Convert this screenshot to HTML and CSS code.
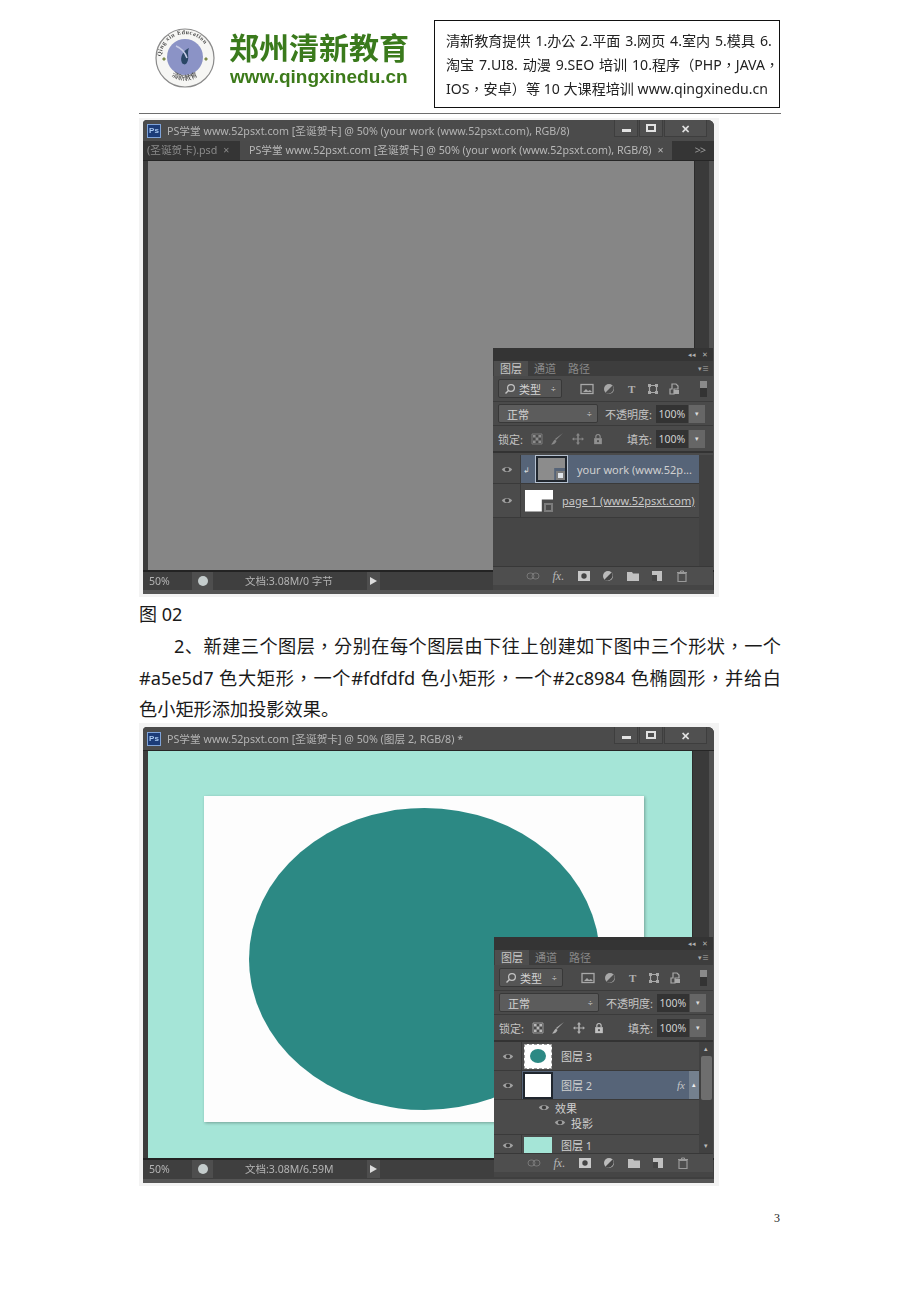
FILE: index.html
```html
<!DOCTYPE html>
<html lang="zh-CN">
<head>
  <meta charset="UTF-8" />
  <title>郑州清新教育</title>
  <link rel="stylesheet" href="styles.css">
</head>
<body>

  <svg class="sprites" width="0" height="0">
    <symbol id="eye" viewBox="0 0 14 10">
      <path d="M1 5c2-4 10-4 12 0c-2 4-10 4-12 0z" fill="#a0a0a0"/>
      <circle cx="7" cy="5" r="2.400" fill="#3a3a3a"/>
    </symbol>
    <symbol id="search" viewBox="0 0 12 12">
      <circle cx="7" cy="5" r="3.400" fill="none" stroke="#c4c4c4" stroke-width="1.200"/>
      <path d="M4.500 7.500L1.500 10.500" stroke="#c4c4c4" stroke-width="1.400"/>
    </symbol>
    <symbol id="f-image" viewBox="0 0 14 12">
      <rect x="1" y="1.500" width="12" height="9" fill="none" stroke="#a8a8a8" stroke-width="1.300"/>
      <path d="M3 9l3-3 2 2 2-1 2 2z" fill="#a8a8a8"/>
    </symbol>
    <symbol id="f-adjust" viewBox="0 0 12 12">
      <circle cx="6" cy="6" r="5" fill="#a8a8a8"/>
      <path d="M9.500 2.500L2.500 9.500A5 5 0 0 0 9.500 2.500z" fill="#4c4c4c"/>
    </symbol>
    <symbol id="f-shape" viewBox="0 0 12 12">
      <path d="M2.500 2.500h7v7h-7z" fill="none" stroke="#a8a8a8" stroke-width="1.200"/>
      <path d="M1 1h3v3H1zM8 1h3v3H8zM1 8h3v3H1zM8 8h3v3H8z" fill="#a8a8a8"/>
    </symbol>
    <symbol id="f-smart" viewBox="0 0 12 12">
      <path d="M4 1h4l2 2v3H6v5H2V6h2z" fill="none" stroke="#a8a8a8" stroke-width="1.200"/>
      <path d="M6 7h5v4H6z" fill="#a8a8a8"/>
    </symbol>
    <symbol id="l-checker" viewBox="0 0 12 12">
      <path d="M1 1h10v10H1z" fill="#4a4a4a" stroke="#9a9a9a"/>
      <path d="M2 2h2.600v2.600H2zM7.400 2H10v2.600H7.400zM4.600 4.600h2.800v2.800H4.600zM2 7.400h2.600V10H2zM7.400 7.400H10V10H7.400z" fill="#b8b8b8"/>
    </symbol>
    <symbol id="l-brush" viewBox="0 0 14 14">
      <path d="M13 1L6 8l-1-1z" fill="#b0b0b0"/>
      <path d="M5 7.500l1.500 1.500C5.500 12 3 12.500 1 12.500C2.500 11.500 3 9 5 7.500z" fill="#b0b0b0"/>
    </symbol>
    <symbol id="l-move" viewBox="0 0 14 14">
      <path d="M7 1l2 2.500H7.800v3h3V5.300L13 7l-2.200 1.700V7.500h-3v3H9L7 13l-2-2.500h1.200v-3h-3v1.200L1 7l2.200-1.700v1.200h3v-3H5z" fill="#b0b0b0"/>
    </symbol>
    <symbol id="l-lock" viewBox="0 0 12 14">
      <path d="M3.500 6V4.200a2.500 2.500 0 0 1 5 0V6" fill="none" stroke="#c0c0c0" stroke-width="1.300"/>
      <path d="M1.500 6h9v7h-9z" fill="#c0c0c0"/>
      <circle cx="6" cy="9.500" r="1.200" fill="#4c4c4c"/>
    </symbol>
    <symbol id="b-link" viewBox="0 0 14 8">
      <rect x="1" y="1" width="7" height="6" rx="3" fill="none" stroke="#777" stroke-width="1"/>
      <rect x="6" y="1" width="7" height="6" rx="3" fill="none" stroke="#777" stroke-width="1"/>
    </symbol>
    <symbol id="b-mask" viewBox="0 0 12 10">
      <rect width="12" height="10" fill="#c8c8c8"/>
      <circle cx="6" cy="5" r="2.700" fill="#444"/>
    </symbol>
    <symbol id="b-adjust" viewBox="0 0 12 12">
      <circle cx="6" cy="6" r="5" fill="#bbb"/>
      <path d="M9.500 2.500L2.500 9.500A5 5 0 0 0 9.500 2.500z" fill="#444"/>
    </symbol>
    <symbol id="b-folder" viewBox="0 0 12 10">
      <path d="M0 1h5l1 1.500h6V10H0z" fill="#c0c0c0"/>
    </symbol>
    <symbol id="b-new" viewBox="0 0 12 12">
      <path d="M1 1h10v10H1z" fill="#c0c0c0"/>
      <path d="M1 5h5v6H1z" fill="#444"/>
    </symbol>
    <symbol id="b-trash" viewBox="0 0 12 12">
      <path d="M1 2.500h10M4.500 2.500V1h3v1.500" fill="none" stroke="#999" stroke-width="1"/>
      <path d="M2 3.500h8V11.500H2z" fill="none" stroke="#999" stroke-width="1.200"/>
    </symbol>
  </svg>

  <main class="page">

    <header class="letterhead">
      <div class="brand">
        <svg class="seal" viewBox="0 0 60 60">
          <circle cx="30" cy="30" r="29" fill="#f6f6f4" stroke="#8a8a8a" stroke-width="1.200"/>
          <circle cx="30" cy="29" r="18" fill="#8b93c6"/>
          <path d="M27 35c-3-6 2-13 7-15c-2 5 0 8-1 12c-1 4-3 6-6 3z" fill="#2a4766"/>
          <path d="M21 18c5 2 9 6 11 12" fill="none" stroke="#c6cbe6" stroke-width="1.500"/>
          <path d="M7 31l2-2 2 2-2 2zM49 31l2-2 2 2-2 2z" fill="#7c8a4a"/>
          <path id="sealArc" d="M6 30a24 24 0 0 1 48 0" fill="none"/>
          <path id="sealLow" d="M12 43a22 22 0 0 0 36 0" fill="none"/>
          <text class="seal-text"><textPath href="#sealArc" startOffset="2%">Qing xin Education</textPath></text>
          <text class="seal-cn"><textPath href="#sealLow" startOffset="16%">清新教育</textPath></text>
        </svg>
        <div class="brand-name">
          <div class="brand-cn">郑州清新教育</div>
          <div class="brand-url">www.qingxinedu.cn</div>
        </div>
      </div>
      <div class="course-box" lang="zh-TW">
        <div class="course-line">清新教育提供 1.办公 2.平面 3.网页 4.室内 5.模具 6.</div>
        <div class="course-line">淘宝 7.UI8. 动漫 9.SEO 培训 10.程序（PHP，JAVA，</div>
        <div class="course-line course-line-last">IOS，安卓）等 10 大课程培训 www.qingxinedu.cn</div>
      </div>
    </header>

    <figure class="shot shot-one">
      <div class="ps-window">
        <div class="ps-title">
          <span class="ps-logo">Ps</span>
          <span class="ps-title-text">PS学堂 www.52psxt.com [圣诞贺卡] @ 50% (your work (www.52psxt.com), RGB/8)</span>
          <div class="ps-controls">
            <span class="ctl"><i class="ctl-min"></i></span>
            <span class="ctl"><i class="ctl-max"></i></span>
            <span class="ctl ctl-wide">✕</span>
          </div>
        </div>
        <div class="ps-tabs">
          <span class="tab tab-off">(圣诞贺卡).psd<b>×</b></span>
          <span class="tab tab-on">PS学堂 www.52psxt.com [圣诞贺卡] @ 50% (your work (www.52psxt.com), RGB/8)<b>×</b></span>
          <span class="tab-more">&gt;&gt;</span>
        </div>
        <div class="ps-body">
          <div class="ps-canvas canvas-grey"></div>
          <div class="ps-scroll"></div>
        </div>
        <div class="ps-status">
          <span class="st-zoom">50%</span>
          <span class="st-btn"><i class="st-dot"></i></span>
          <span class="st-doc">文档:3.08M/0 字节</span>
          <span class="st-btn st-btn-arrow"><i class="st-arrow"></i></span>
        </div>

        <section class="panel panel-one">
          <div class="panel-top"><span>◂◂</span><span>✕</span></div>
          <div class="panel-tabs">
            <span class="ptab ptab-on">图层</span><span class="ptab">通道</span><span class="ptab">路径</span>
            <span class="ptab-menu">▾≡</span>
          </div>
          <div class="prow prow-filter">
            <span class="pfield pfield-kind"><svg class="i12"><use href="#search"/></svg>类型<em>÷</em></span>
            <div class="filter-icons">
              <svg class="i14"><use href="#f-image"/></svg>
              <svg class="i12"><use href="#f-adjust"/></svg>
              <span class="f-t">T</span>
              <svg class="i12"><use href="#f-shape"/></svg>
              <svg class="i12"><use href="#f-smart"/></svg>
            </div>
            <span class="switch"></span>
          </div>
          <div class="prow prow-blend">
            <span class="pfield pfield-mode">正常<em>÷</em></span>
            <span class="plabel">不透明度:</span><span class="pval">100%</span><span class="pbtn">▾</span>
          </div>
          <div class="prow prow-lock">
            <span class="plabel">锁定:</span>
            <div class="lock-icons dim">
              <svg class="i12"><use href="#l-checker"/></svg>
              <svg class="i14"><use href="#l-brush"/></svg>
              <svg class="i14"><use href="#l-move"/></svg>
              <svg class="i12"><use href="#l-lock"/></svg>
            </div>
            <span class="plabel plabel-fill">填充:</span><span class="pval">100%</span><span class="pbtn">▾</span>
          </div>
          <div class="layers">
            <div class="layer-list">
              <div class="layer layer-active h29">
                <span class="eye"><svg class="i-eye"><use href="#eye"/></svg></span>
                <span class="clip">↲</span>
                <span class="thumb thumb-selected">
                  <span class="thumb-grey"></span>
                  <span class="smart-badge"></span>
                </span>
                <span class="lname">your work (www.52p...</span>
              </div>
              <div class="layer h34">
                <span class="eye"><svg class="i-eye"><use href="#eye"/></svg></span>
                <span class="thumb-wrap">
                  <span class="thumb thumb-white"></span>
                  <span class="smart-badge"></span>
                </span>
                <span class="lname lname-under">page 1 (www.52psxt.com)</span>
              </div>
            </div>
            <div class="layer-scroll"></div>
          </div>
          <div class="panel-foot">
            <svg class="i14 icon-link"><use href="#b-link"/></svg>
            <span class="fx-btn">fx.</span>
            <svg class="i12"><use href="#b-mask"/></svg>
            <svg class="i12"><use href="#b-adjust"/></svg>
            <svg class="i12"><use href="#b-folder"/></svg>
            <svg class="i12"><use href="#b-new"/></svg>
            <svg class="i12"><use href="#b-trash"/></svg>
          </div>
          <div class="panel-grip"></div>
        </section>
      </div>
    </figure>

    <p class="caption">图 02</p>
    <div class="para" lang="zh-TW">
      <div class="para-line para-first">2<span lang="zh-CN">、</span>新建三个图层，分别在每个图层由下往上创建如下图中三个形状，一个</div>
      <div class="para-line">#a5e5d7 色大矩形，一个#fdfdfd 色小矩形，一个#2c8984 色椭圆形，并给白</div>
      <div class="para-line para-last">色小矩形添加投影效果<span lang="zh-CN">。</span></div>
    </div>

    <figure class="shot shot-two">
      <div class="ps-window">
        <div class="ps-title ps-title-tall">
          <span class="ps-logo">Ps</span>
          <span class="ps-title-text">PS学堂 www.52psxt.com [圣诞贺卡] @ 50% (图层 2, RGB/8) *</span>
          <div class="ps-controls">
            <span class="ctl"><i class="ctl-min"></i></span>
            <span class="ctl"><i class="ctl-max"></i></span>
            <span class="ctl ctl-wide">✕</span>
          </div>
        </div>
        <div class="ps-body">
          <div class="ps-canvas canvas-mint">
            <div class="white-rect">
              <div class="teal-ellipse"></div>
            </div>
          </div>
          <div class="ps-scroll"></div>
        </div>
        <div class="ps-status">
          <span class="st-zoom">50%</span>
          <span class="st-btn"><i class="st-dot"></i></span>
          <span class="st-doc">文档:3.08M/6.59M</span>
          <span class="st-btn st-btn-arrow"><i class="st-arrow"></i></span>
        </div>

        <section class="panel panel-two">
          <div class="panel-top"><span>◂◂</span><span>✕</span></div>
          <div class="panel-tabs">
            <span class="ptab ptab-on">图层</span><span class="ptab">通道</span><span class="ptab">路径</span>
            <span class="ptab-menu">▾≡</span>
          </div>
          <div class="prow prow-filter">
            <span class="pfield pfield-kind"><svg class="i12"><use href="#search"/></svg>类型<em>÷</em></span>
            <div class="filter-icons">
              <svg class="i14"><use href="#f-image"/></svg>
              <svg class="i12"><use href="#f-adjust"/></svg>
              <span class="f-t">T</span>
              <svg class="i12"><use href="#f-shape"/></svg>
              <svg class="i12"><use href="#f-smart"/></svg>
            </div>
            <span class="switch"></span>
          </div>
          <div class="prow prow-blend">
            <span class="pfield pfield-mode">正常<em>÷</em></span>
            <span class="plabel">不透明度:</span><span class="pval">100%</span><span class="pbtn">▾</span>
          </div>
          <div class="prow prow-lock">
            <span class="plabel">锁定:</span>
            <div class="lock-icons">
              <svg class="i12"><use href="#l-checker"/></svg>
              <svg class="i14"><use href="#l-brush"/></svg>
              <svg class="i14"><use href="#l-move"/></svg>
              <svg class="i12"><use href="#l-lock"/></svg>
            </div>
            <span class="plabel plabel-fill">填充:</span><span class="pval">100%</span><span class="pbtn">▾</span>
          </div>
          <div class="layers layers-two">
            <div class="layer-list">
              <div class="layer h29">
                <span class="eye"><svg class="i-eye"><use href="#eye"/></svg></span>
                <span class="thumb thumb-dots"><span class="thumb-teal"></span></span>
                <span class="lname">图层 3</span>
              </div>
              <div class="layer layer-active h29">
                <span class="eye"><svg class="i-eye"><use href="#eye"/></svg></span>
                <span class="thumb thumb-dots thumb-selected-two"></span>
                <span class="lname">图层 2</span>
                <span class="fx-mark">fx</span>
                <span class="fx-toggle">▴</span>
              </div>
              <div class="effects">
                <div class="effect"><svg class="i-eye"><use href="#eye"/></svg>效果</div>
                <div class="effect effect-sub"><svg class="i-eye"><use href="#eye"/></svg>投影</div>
              </div>
              <div class="layer layer-cut">
                <span class="eye"><svg class="i-eye"><use href="#eye"/></svg></span>
                <span class="thumb thumb-mint"></span>
                <span class="lname">图层 1</span>
              </div>
            </div>
            <div class="layer-scroll layer-scroll-two">
              <span class="sc-up">▴</span>
              <span class="sc-thumb"></span>
              <span class="sc-down">▾</span>
            </div>
          </div>
          <div class="panel-foot">
            <svg class="i14 icon-link"><use href="#b-link"/></svg>
            <span class="fx-btn">fx.</span>
            <svg class="i12"><use href="#b-mask"/></svg>
            <svg class="i12"><use href="#b-adjust"/></svg>
            <svg class="i12"><use href="#b-folder"/></svg>
            <svg class="i12"><use href="#b-new"/></svg>
            <svg class="i12"><use href="#b-trash"/></svg>
          </div>
          <div class="panel-grip"></div>
        </section>
      </div>
    </figure>

    <footer class="page-no">3</footer>
  </main>

</body>
</html>
```

FILE: styles.css
```css
body {
  margin: 0;
  background-color: #fff;
  color: #1a1a1a;
  font-family: "Noto Sans", "Noto Sans CJK SC", sans-serif;
}

.sprites {
  position: absolute;
}

.page {
  width: 642px;
  height: 1302px;
  margin-left: 139px;
  box-sizing: border-box;
  padding-top: 20px;
}

/* letterhead */

.letterhead {
  display: flex;
  justify-content: space-between;
  height: 93px;
  border-bottom: 1px solid #6e6e6e;
  margin-bottom: 4px;
}

.brand {
  display: flex;
  align-items: flex-start;
  padding: 8px 0 0 16px;
  gap: 14px;
}

.seal {
  width: 60px;
  height: 60px;
  filter: blur(0.4px);
}

.seal-text {
  font: 700 6px "Liberation Serif", serif;
  letter-spacing: 0.5px;
  fill: #4a4a4a;
}

.seal-cn {
  font: 7px "Noto Sans CJK SC", sans-serif;
  fill: #3a3a3a;
}

.brand-name {
  filter: blur(0.3px);
}

.brand-cn {
  font: 700 30px/36px "Noto Sans CJK SC", sans-serif;
  color: #3a7a1c;
  white-space: nowrap;
}

.brand-url {
  font: 700 19px/26px "Liberation Sans", sans-serif;
  color: #3c7a1a;
  padding-left: 1px;
}

.course-box {
  width: 346px;
  height: 88px;
  box-sizing: border-box;
  border: 1px solid #111;
  margin-right: 1px;
  padding: 8px 0 0 11px;
  font-family: "Noto Sans", "Noto Sans CJK TC", sans-serif;
  font-size: 14.1px;
  line-height: 24px;
  color: #222;
  filter: blur(0.2px);
}

.course-line {
  white-space: nowrap;
  word-spacing: 1.2px;
}

.course-line-last {
  word-spacing: 0;
}

/* screenshots */

.shot {
  width: 580px;
  margin: 0;
  box-sizing: border-box;
  background-color: #f3f3f3;
  padding: 2px 5px 3px 4px;
}

.shot-one {
  height: 479px;
}

.shot-two {
  height: 463px;
  margin-top: -3px;
  padding-top: 4px;
}

.ps-window {
  position: relative;
  display: flex;
  flex-direction: column;
  height: 100%;
  background-color: #3c3c3c;
  border-radius: 4px 6px 0 0;
  filter: blur(0.45px);
}

.ps-title {
  display: flex;
  align-items: center;
  height: 21px;
  padding-left: 4px;
  background-color: #4b4b4b;
  color: #b4b4b4;
  font-size: 10.7px;
  flex-shrink: 0;
  border-radius: 4px 6px 0 0;
}

.ps-title-tall {
  height: 23px;
}

.ps-logo {
  width: 14px;
  height: 14px;
  margin-right: 6px;
  background-color: #1c3c78;
  border: 1px solid #7fa3d8;
  box-sizing: border-box;
  color: #a8c8f0;
  font: 700 8px/12px "Liberation Sans", sans-serif;
  text-align: center;
}

.ps-title-text {
  white-space: nowrap;
}

.ps-controls {
  display: flex;
  align-self: flex-start;
  margin-left: auto;
  margin-right: 7px;
  height: 17px;
  gap: 1px;
}

.ctl {
  display: flex;
  align-items: center;
  justify-content: center;
  width: 24px;
  background-color: #505050;
  border: 1px solid #3e3e3e;
  border-top: 0;
  box-sizing: border-box;
  color: #e2e2e2;
  font-size: 11px;
  font-weight: 700;
}

.ctl-wide {
  width: 43px;
}

.ctl-min {
  display: block;
  width: 9px;
  height: 3px;
  margin-top: 5px;
  background-color: #e2e2e2;
}

.ctl-max {
  display: block;
  width: 10px;
  height: 8px;
  box-sizing: border-box;
  border: 2px solid #e2e2e2;
}

.ps-tabs {
  display: flex;
  align-items: stretch;
  height: 19px;
  background-color: #353535;
  color: #9a9a9a;
  font-size: 10.7px;
  line-height: 19px;
  white-space: nowrap;
  flex-shrink: 0;
}

.tab b {
  font-weight: 400;
  margin-left: 6px;
}

.tab-off {
  width: 97px;
  box-sizing: border-box;
  padding-left: 4px;
  color: #8a8a8a;
}

.tab-on {
  width: 432px;
  box-sizing: border-box;
  padding-left: 9px;
  background-color: #4a4a4a;
  color: #b8b8b8;
}

.tab-more {
  margin-left: auto;
  padding-right: 9px;
  letter-spacing: -1px;
}

.ps-body {
  display: flex;
  flex: 1;
  min-height: 0;
  padding-left: 5px;
  border-top: 1px solid #262626;
}

.ps-canvas {
  position: relative;
  flex: 1;
}

.canvas-grey {
  background-color: #868686;
}

.canvas-mint {
  background-color: #a5e5d7;
}

.ps-scroll {
  width: 20px;
  background-color: #3a3a3a;
  border-left: 1px solid #2c2c2c;
  border-right: 5px solid #505050;
  box-sizing: border-box;
}

.shot-two .ps-scroll {
  width: 22px;
}

.ps-status {
  display: flex;
  align-items: flex-start;
  height: 24px;
  padding-left: 6px;
  background-color: #3f3f3f;
  border-top: 2px solid #232323;
  border-bottom: 4px solid #555;
  box-sizing: border-box;
  color: #b4b4b4;
  font-size: 10.5px;
  line-height: 18px;
  flex-shrink: 0;
}

.shot-two .ps-status {
  height: 25px;
}

.st-zoom {
  width: 43px;
}

.st-btn {
  display: flex;
  align-items: center;
  justify-content: center;
  width: 21px;
  height: 18px;
  background-color: #4e4e4e;
}

.st-btn-arrow {
  width: 13px;
}

.st-dot {
  width: 10px;
  height: 10px;
  border-radius: 50%;
  background-color: #c4cccc;
}

.st-doc {
  width: 122px;
  margin-left: 32px;
}

.st-arrow {
  width: 0;
  height: 0;
  border-left: 7px solid #dcdcdc;
  border-top: 4px solid transparent;
  border-bottom: 4px solid transparent;
}

/* canvas shapes */

.white-rect {
  position: absolute;
  left: 56px;
  top: 45px;
  width: 440px;
  height: 326px;
  background-color: #fdfdfd;
  box-shadow: 1px 1px 3px rgba(0, 0, 0, 0.3);
}

.teal-ellipse {
  position: absolute;
  left: 45px;
  top: 12px;
  width: 351px;
  height: 302px;
  border-radius: 50%;
  background-color: #2c8984;
}

/* layers panel */

.panel {
  position: absolute;
  left: 350px;
  right: 1px;
  display: flex;
  flex-direction: column;
  background-color: #4a4a4a;
  color: #c4c4c4;
  font-size: 11px;
  box-sizing: border-box;
}

.panel-one {
  top: 228px;
  height: 242px;
}

.panel-one .layers {
  margin-top: 2px;
}

.panel-two {
  left: 351px;
  top: 210px;
  height: 240px;
}

.panel-top {
  display: flex;
  justify-content: flex-end;
  gap: 6px;
  height: 13px;
  padding-right: 5px;
  background-color: #343434;
  color: #b0b0b0;
  font-size: 7px;
  line-height: 13px;
  flex-shrink: 0;
}

.panel-tabs {
  display: flex;
  height: 15px;
  background-color: #3d3d3d;
  line-height: 15px;
  flex-shrink: 0;
}

.ptab {
  padding: 0 6px;
  color: #8a8a8a;
}

.ptab-on {
  background-color: #4e4e4e;
  color: #c8c8c8;
  margin-left: 1px;
}

.ptab-menu {
  margin-left: auto;
  padding-right: 4px;
  font-size: 7px;
  color: #aaa;
}

.prow {
  display: flex;
  align-items: center;
  padding-left: 5px;
  border-bottom: 1px solid #3b3b3b;
  flex-shrink: 0;
}

.prow-filter {
  height: 25px;
}

.prow-blend {
  height: 23px;
}

.prow-lock {
  height: 25px;
  border-bottom: 2px solid #333;
}

.pfield {
  display: flex;
  align-items: center;
  height: 19px;
  box-sizing: border-box;
  padding: 0 5px;
  border: 1px solid #383838;
  border-radius: 2px;
  background-color: #555;
  color: #d4d4d4;
}

.pfield em {
  margin-left: auto;
  font-style: normal;
  font-size: 9px;
}

.pfield-kind {
  width: 64px;
  gap: 3px;
}

.pfield-mode {
  width: 100px;
  padding-left: 8px;
  margin-right: 7px;
  background-color: #5c5c5c;
}

.filter-icons {
  display: flex;
  align-items: center;
  gap: 9px;
  margin-left: 18px;
}

.f-t {
  margin: 0 3px 0 4px;
  font: 700 11px/12px "Liberation Serif", serif;
  color: #b0b0b0;
}

.switch {
  width: 7px;
  height: 16px;
  margin-left: auto;
  margin-right: 6px;
  background: linear-gradient(#8a8a8a 45%, #333 45%);
}

.plabel {
  white-space: nowrap;
}

.pval {
  width: 32px;
  height: 18px;
  margin-left: 4px;
  background-color: #333;
  color: #d0d0d0;
  font-size: 10.5px;
  line-height: 18px;
  text-align: center;
}

.pbtn {
  width: 16px;
  height: 18px;
  margin-left: 1px;
  background-color: #666;
  color: #ddd;
  font-size: 7px;
  line-height: 18px;
  text-align: center;
}

.lock-icons {
  display: flex;
  align-items: center;
  gap: 7px;
  margin-left: 8px;
}

.lock-icons.dim {
  opacity: 0.6;
}

.plabel-fill {
  margin-left: 23px;
}

.i12 {
  width: 12px;
  height: 12px;
  flex-shrink: 0;
}

.i14 {
  width: 14px;
  height: 14px;
  flex-shrink: 0;
}

.i-eye {
  width: 12px;
  height: 9px;
  flex-shrink: 0;
}

.layers {
  display: flex;
  flex: 1;
  min-height: 0;
  overflow: hidden;
  background-color: #464646;
}

.layer-list {
  flex: 1;
  min-width: 0;
  overflow: hidden;
}

.layer-scroll {
  width: 14px;
  background-color: #414141;
  flex-shrink: 0;
}

.layer {
  display: flex;
  align-items: center;
  border-bottom: 1px solid #3a3a3a;
  background-color: #4b4b4b;
  box-sizing: border-box;
}

.h34 {
  height: 34px;
}

.h29 {
  height: 29px;
}

.eye {
  display: flex;
  align-items: center;
  justify-content: center;
  align-self: stretch;
  width: 28px;
  background-color: #4b4b4b;
  border-right: 1px solid #3a3a3a;
  box-sizing: border-box;
  flex-shrink: 0;
}

.layer-active {
  background-color: #566478;
}

.clip {
  width: 11px;
  padding-left: 2px;
  color: #ddd;
  font-size: 8px;
  flex-shrink: 0;
}

.thumb {
  display: block;
  flex-shrink: 0;
  box-sizing: border-box;
  position: relative;
}

.thumb-selected {
  width: 31px;
  height: 26px;
  border: 2px solid #20262e;
  outline: 1px solid #b4c0d0;
  margin: 0 10px 0 2px;
}

.thumb-grey {
  display: block;
  height: 100%;
  background-color: #8c8c8c;
  clip-path: polygon(0 0, 100% 0, 100% 45%, 60% 45%, 60% 100%, 0 100%);
}

.thumb-selected .smart-badge {
  right: 0;
  bottom: 0;
  background-color: #dfe4ea;
}

.thumb-wrap {
  position: relative;
  width: 28px;
  height: 22px;
  margin: 0 9px 0 4px;
  flex-shrink: 0;
}

.thumb-white {
  width: 28px;
  height: 22px;
  background-color: #fff;
  clip-path: polygon(0 0, 100% 0, 100% 45%, 60% 45%, 60% 100%, 0 100%);
}

.smart-badge {
  position: absolute;
  right: 0;
  bottom: 0;
  width: 9px;
  height: 9px;
  box-sizing: border-box;
  border: 2px solid #7c7c7c;
  background-color: #4b4b4b;
}

.lname {
  color: #d0d0d0;
  white-space: nowrap;
}

.lname-under {
  text-decoration: underline;
  color: #c8c8c8;
}

.thumb-dots {
  width: 28px;
  height: 25px;
  margin: 0 9px 0 2px;
  display: flex;
  align-items: center;
  justify-content: center;
  background-color: #fff;
  border: 1px dashed #a0a0a0;
}

.thumb-selected-two {
  outline: 2px solid #20262e;
  outline-offset: -1px;
}

.thumb-teal {
  width: 16px;
  height: 14px;
  border-radius: 50%;
  background-color: #2c8984;
}

.thumb-mint {
  width: 28px;
  height: 22px;
  margin: 2px 9px 0 2px;
  background-color: #a5e5d7;
  align-self: flex-start;
}

.fx-mark {
  margin-left: auto;
  font: italic 11px "Liberation Serif", serif;
  color: #c8c8c8;
  margin-right: 4px;
}

.fx-toggle {
  width: 10px;
  align-self: stretch;
  background-color: #74808e;
  font-size: 7px;
  line-height: 28px;
  text-align: center;
  color: #eee;
}

.effects {
  height: 35px;
  padding: 0 0 0 28px;
  box-sizing: border-box;
  background-color: #4b4b4b;
  border-bottom: 1px solid #3a3a3a;
}

.effect {
  display: flex;
  align-items: center;
  gap: 5px;
  height: 15px;
  padding-left: 16px;
  color: #d0d0d0;
}

.effect-sub {
  padding-left: 32px;
}

.layer-cut {
  height: 18px;
  align-items: flex-start;
  border-bottom: 0;
}

.layer-cut .eye {
  align-items: flex-start;
  padding-top: 6px;
}

.layer-cut .lname {
  margin-top: 5px;
  line-height: 12px;
}

.layer-scroll-two {
  display: flex;
  flex-direction: column;
  align-items: center;
  color: #bbb;
  font-size: 7px;
}

.sc-up {
  height: 14px;
  line-height: 14px;
}

.sc-thumb {
  width: 11px;
  height: 44px;
  background-color: #6e6e6e;
  border-radius: 2px;
}

.sc-down {
  margin-top: auto;
  line-height: 14px;
}

.panel-foot {
  display: flex;
  align-items: center;
  gap: 12.5px;
  height: 19px;
  padding-left: 33px;
  background-color: #4e4e4e;
  border-top: 1px solid #383838;
  box-sizing: border-box;
  flex-shrink: 0;
}

.fx-btn {
  font: italic 12px "Liberation Serif", serif;
  color: #b8b8b8;
  margin-right: 1px;
}

.panel-grip {
  height: 5px;
  background-color: #454545;
  flex-shrink: 0;
}

/* body text */

.caption {
  margin: 0 0 1px;
  padding-top: 1px;
  font-size: 18px;
  line-height: 32px;
}

.para {
  font-family: "Noto Sans", "Noto Sans CJK TC", sans-serif;
  font-size: 18.2px;
  line-height: 31.7px;
  text-spacing-trim: space-all;
}

.para-line {
  white-space: nowrap;
  text-align: justify;
  text-align-last: justify;
}

.para-first {
  padding-left: 35px;
}

.para-last {
  text-align-last: left;
}

.page-no {
  margin-top: 25px;
  padding-right: 1px;
  font: 12px/14px "Liberation Serif", serif;
  text-align: right;
  color: #222;
}
```
